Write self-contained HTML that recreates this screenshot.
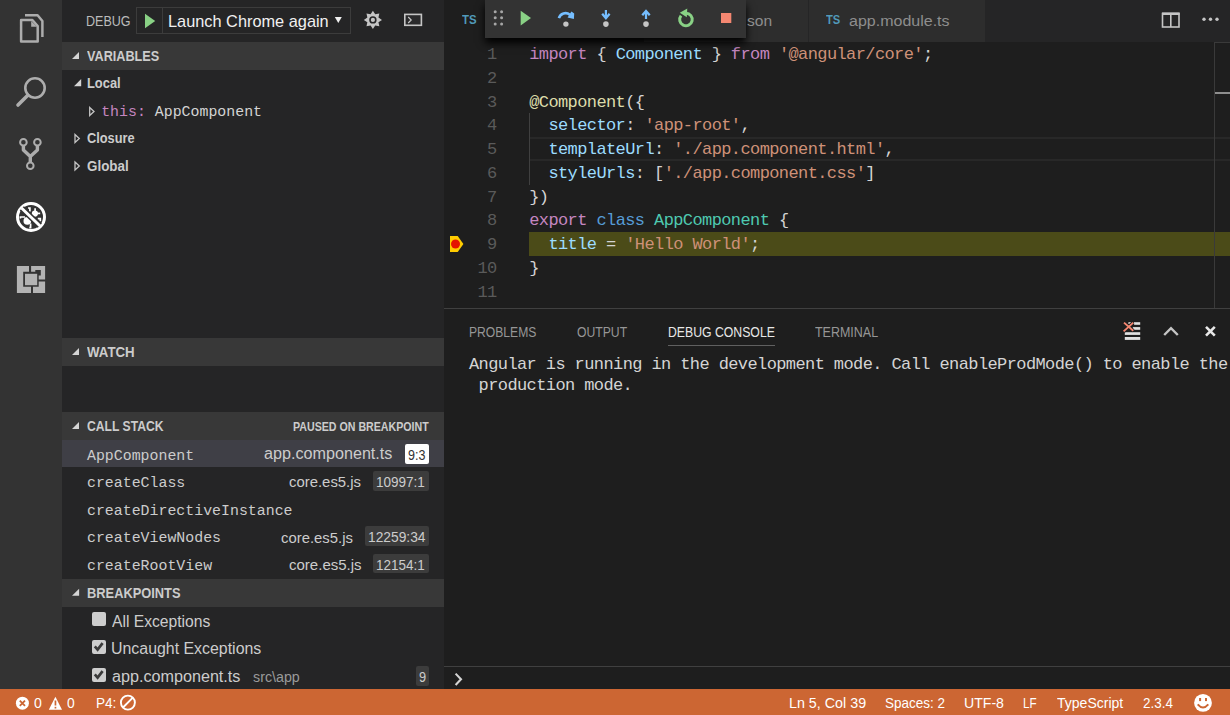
<!DOCTYPE html>
<html><head><meta charset="utf-8">
<style>
*{margin:0;padding:0;box-sizing:border-box}
html,body{width:1230px;height:715px;overflow:hidden;background:#1e1e1e}
body{position:relative;font-family:"Liberation Sans",sans-serif;color:#cccccc}
.a{position:absolute}
.t{position:absolute;white-space:pre;line-height:1;transform-origin:0 0}
.m{font-family:"Liberation Mono",monospace}
.b{font-weight:bold}
svg{position:absolute;overflow:visible}
.ln{position:absolute;left:444px;width:52.6px;text-align:right;font-family:"Liberation Mono",monospace;font-size:17px;letter-spacing:-0.6px;line-height:25.5px;color:#5a5a5a;white-space:pre}
.cl{position:absolute;left:529.2px;font-family:"Liberation Mono",monospace;font-size:17px;letter-spacing:-0.6px;line-height:25.5px;color:#d4d4d4;white-space:pre}
.k{color:#c586c0}.v{color:#9cdcfe}.s{color:#ce9178}.f{color:#dcdcaa}.c{color:#569cd6}.ty{color:#4ec9b0}

</style></head><body>

<!-- activity bar -->
<div class="a" style="left:0;top:0;width:62px;height:689px;background:#333333"></div>


<svg style="left:0;top:0" width="62" height="300">
 <g fill="none" stroke="#adadad" stroke-width="2.5" stroke-linejoin="round">
  <path d="M21.1 20 H32.4 L37.7 26 V41.4 H21.1 Z"/>
  <path d="M25 15.3 H37.6 L42.4 21 V37"/>
 </g>
 <path d="M31.2 21 V26.8 H37 Z" fill="#adadad"/>
 <g fill="none" stroke="#adadad">
  <circle cx="35" cy="88" r="9.7" stroke-width="2.6"/>
  <path d="M27.8 95.2 L18 105" stroke-width="3.6" stroke-linecap="round"/>
 </g>
 <g fill="none" stroke="#adadad" stroke-width="2">
  <circle cx="23.4" cy="142.2" r="3.3"/>
  <circle cx="37.4" cy="142.2" r="3.3"/>
  <circle cx="30.3" cy="165.7" r="3.3"/>
 </g>
 <path d="M23.4 145.5 V150 L30.3 156.5 L37.4 150 V145.5 M30.3 156 V162.4" fill="none" stroke="#adadad" stroke-width="3.4" stroke-linejoin="round"/>
 <circle cx="31" cy="217" r="13.5" fill="none" stroke="#ffffff" stroke-width="3"/>
 <g fill="#ffffff">
  <circle cx="34.9" cy="213.6" r="3.1"/>
  <circle cx="27.3" cy="220.9" r="3.8"/>
 </g>
 <g fill="none" stroke="#ffffff" stroke-width="1.7">
  <path d="M28 208 H29.9 V211.5"/>
  <path d="M35.1 208.2 V211.5"/>
  <path d="M36.5 213.4 H40.2"/>
  <path d="M37.8 218.6 H40.3 V221.2"/>
  <path d="M25 217 H20.4 V218.6"/>
  <path d="M30.6 223.5 V227.6 H29.3"/>
 </g>
 <path d="M21.8 208.3 L39.8 225.7" stroke="#333333" stroke-width="6"/>
 <path d="M21.5 208 L40.1 226" stroke="#ffffff" stroke-width="3"/>
 <g fill="#b3b3b3">
  <path d="M16.9 266 H29 V271.8 H23.2 V286.7 H31 V293 H16.9 Z"/>
  <path d="M31.1 266 H45.1 V279.6 H38.7 V275.6 H40.8 V270 H35.3 V271.8 H31.1 Z"/>
  <path d="M33 286.7 H38.7 V281.4 H45.1 V293 H33 Z"/>
  <rect x="25" y="273.8" width="12.2" height="11.4"/>
 </g>
</svg>

<!-- sidebar -->

<div class="a" style="left:62px;top:0;width:382px;height:689px;background:#252526"></div>
<!-- title -->
<div class="a" style="left:136px;top:7px;width:215px;height:27px;border:1px solid #3c3c3c"></div>
<div class="a" style="left:162px;top:8px;width:1px;height:25px;background:#3c3c3c"></div>
<svg style="left:0;top:0" width="1" height="1"><path d="M145 13.7 L155.2 21 L145 28.3 Z" fill="#89d185"/></svg>
<svg style="left:0;top:0" width="1" height="1"><path d="M334.8 17 H341.8 L338.3 23 Z" fill="#f0f0f0"/></svg>
<!-- gear -->
<svg style="left:0;top:0" width="1" height="1">
 <polygon points="372.90,10.80 375.20,14.36 379.33,13.47 378.44,17.60 382.00,19.90 378.44,22.20 379.33,26.33 375.20,25.44 372.90,29.00 370.60,25.44 366.47,26.33 367.36,22.20 363.80,19.90 367.36,17.60 366.47,13.47 370.60,14.36" fill="#c5c5c5"/>
 <circle cx="372.9" cy="19.9" r="3.7" fill="#252526"/>
 <circle cx="372.9" cy="19.9" r="2.1" fill="#c5c5c5"/>
</svg>
<!-- terminal icon -->
<svg style="left:0;top:0" width="1" height="1">
 <rect x="404.8" y="14.4" width="16.6" height="10.9" fill="#2a2a2b" stroke="#c5c5c5" stroke-width="1.6"/>
 <path d="M408.2 17 L411.2 20 L408.2 23" fill="none" stroke="#c5c5c5" stroke-width="1.2"/>
</svg>

<!-- VARIABLES -->
<div class="a" style="left:62px;top:42px;width:382px;height:27.5px;background:#383838"></div>
<svg style="left:0;top:0" width="1" height="1"><path d="M79 52 V59 H72 Z" fill="#d4d4d4"/></svg>

<svg style="left:0;top:0" width="1" height="1"><path d="M81.2 79 V86.2 H74 Z" fill="#d4d4d4"/></svg>
<svg style="left:0;top:0" width="1" height="1"><path d="M89.7 107.5 L94 111.5 L89.7 115.5 Z" fill="none" stroke="#c5c5c5" stroke-width="1.3"/></svg>
<div class="t m" style="left:101.2px;top:104.8px;font-size:14.9px;color:#c586c0">this:<span style="color:#d4d4d4"> AppComponent</span></div>
<svg style="left:0;top:0" width="1" height="1"><path d="M75 134.5 L79.3 138.5 L75 142.5 Z" fill="none" stroke="#c5c5c5" stroke-width="1.3"/></svg>
<svg style="left:0;top:0" width="1" height="1"><path d="M75 162 L79.3 166 L75 170 Z" fill="none" stroke="#c5c5c5" stroke-width="1.3"/></svg>

<!-- WATCH -->
<div class="a" style="left:62px;top:338px;width:382px;height:27.5px;background:#383838"></div>
<svg style="left:0;top:0" width="1" height="1"><path d="M79 348 V355 H72 Z" fill="#d4d4d4"/></svg>

<!-- CALL STACK -->
<div class="a" style="left:62px;top:412px;width:382px;height:28px;background:#383838"></div>
<svg style="left:0;top:0" width="1" height="1"><path d="M79 422 V429 H72 Z" fill="#d4d4d4"/></svg>

<div class="a" style="left:62px;top:440px;width:382px;height:27px;background:#3f3f46"></div>
<div class="t m" style="left:87px;top:448.8px;font-size:14.9px;color:#cccccc">AppComponent</div>
<div class="a" style="left:405px;top:444px;width:24px;height:19.5px;background:#ffffff;border-radius:2px"></div>

<div class="t m" style="left:87px;top:476.3px;font-size:14.9px;color:#cccccc">createClass</div>
<div class="a" style="left:373px;top:471.4px;width:56px;height:19.5px;background:#3c3c3c;border-radius:2px"></div>

<div class="t m" style="left:87px;top:503.8px;font-size:14.9px;color:#cccccc">createDirectiveInstance</div>

<div class="t m" style="left:87px;top:531.3px;font-size:14.9px;color:#cccccc">createViewNodes</div>
<div class="a" style="left:365px;top:526.4px;width:64px;height:19.5px;background:#3c3c3c;border-radius:2px"></div>

<div class="t m" style="left:87px;top:558.8px;font-size:14.9px;color:#cccccc">createRootView</div>
<div class="a" style="left:373px;top:553.9px;width:56px;height:19.5px;background:#3c3c3c;border-radius:2px"></div>

<!-- BREAKPOINTS -->
<div class="a" style="left:62px;top:578.8px;width:382px;height:28px;background:#383838"></div>
<svg style="left:0;top:0" width="1" height="1"><path d="M79.1 588.8 V595.8 H72 Z" fill="#d4d4d4"/></svg>

<div class="a" style="left:92px;top:612px;width:14px;height:14px;background:#cdcdcd;border-radius:2px"></div>
<div class="a" style="left:92px;top:640px;width:14px;height:14px;background:#cdcdcd;border-radius:2px"></div>
<svg style="left:0;top:0" width="1" height="1"><path d="M94.8 646.4 L97.6 649.6 L102.6 643.2" fill="none" stroke="#3a3a3a" stroke-width="2.7"/></svg>
<div class="a" style="left:92px;top:668px;width:14px;height:14px;background:#cdcdcd;border-radius:2px"></div>
<svg style="left:0;top:0" width="1" height="1"><path d="M94.8 674.4 L97.6 677.6 L102.6 671.2" fill="none" stroke="#3a3a3a" stroke-width="2.7"/></svg>
<div class="a" style="left:416px;top:666.2px;width:13px;height:20.3px;background:#3c3c3c;border-radius:2px"></div>



<!-- editor -->
<div class="a" style="left:444px;top:0;width:786px;height:42px;background:#252526"></div>
<div class="a" style="left:444px;top:0;width:200px;height:42px;background:#1e1e1e"></div>
<div class="a" style="left:644px;top:0;width:163.5px;height:42px;background:#2d2d2d"></div>
<div class="a" style="left:808.5px;top:0;width:176.5px;height:42px;background:#2d2d2d"></div>
<!-- split / more -->
<svg style="left:0;top:0" width="1" height="1">
 <rect x="1162.5" y="13.5" width="16.5" height="13.5" fill="none" stroke="#c5c5c5" stroke-width="1.6"/>
 <rect x="1162" y="12.5" width="17.5" height="2.5" fill="#c5c5c5"/>
 <rect x="1170" y="13.5" width="1.6" height="13.5" fill="#c5c5c5"/>
 <circle cx="1204" cy="19.3" r="1.7" fill="#c5c5c5"/>
 <circle cx="1210.5" cy="19.3" r="1.7" fill="#c5c5c5"/>
 <circle cx="1217" cy="19.3" r="1.7" fill="#c5c5c5"/>
</svg>


<!-- current line box -->
<div class="a" style="left:530px;top:137px;width:700px;height:24px;border-top:2px solid #282828;border-bottom:2px solid #282828"></div>
<!-- stack frame highlight -->
<div class="a" style="left:529px;top:232px;width:701px;height:23.75px;background:#4b4b18"></div>
<!-- indent guide -->
<div class="a" style="left:529px;top:113.25px;width:1px;height:71.25px;background:#404040"></div>
<!-- overview ruler -->
<div class="a" style="left:1214px;top:42px;width:1px;height:266px;background:#3a3a3a"></div>
<div class="a" style="left:1215px;top:92px;width:15px;height:1.5px;background:#8e8e8e"></div>
<div class="a" style="left:1214px;top:42px;width:16px;height:1px;background:#3a3a3a"></div>
<!-- breakpoint marker -->
<svg style="left:0;top:0" width="1" height="1">
 <path d="M450 236 H457.7 L463.4 244 L457.7 251.9 H450 Z" fill="#ffcc00"/>
 <circle cx="455.5" cy="244" r="4.5" fill="#e51400"/>
</svg>
<div class="ln" style="top:42.00px">1</div>
<div class="cl" style="top:42.00px"><span class="k">import</span> { <span class="v">Component</span> } <span class="k">from</span> <span class="s">'@angular/core'</span>;</div>
<div class="ln" style="top:65.75px">2</div>
<div class="ln" style="top:89.50px">3</div>
<div class="cl" style="top:89.50px"><span class="f">@Component</span>({</div>
<div class="ln" style="top:113.25px">4</div>
<div class="cl" style="top:113.25px">  <span class="v">selector</span>: <span class="s">'app-root'</span>,</div>
<div class="ln" style="top:137.00px">5</div>
<div class="cl" style="top:137.00px">  <span class="v">templateUrl</span>: <span class="s">'./app.component.html'</span>,</div>
<div class="ln" style="top:160.75px">6</div>
<div class="cl" style="top:160.75px">  <span class="v">styleUrls</span>: [<span class="s">'./app.component.css'</span>]</div>
<div class="ln" style="top:184.50px">7</div>
<div class="cl" style="top:184.50px">})</div>
<div class="ln" style="top:208.25px">8</div>
<div class="cl" style="top:208.25px"><span class="k">export</span> <span class="c">class</span> <span class="ty">AppComponent</span> {</div>
<div class="ln" style="top:232.00px">9</div>
<div class="cl" style="top:232.00px">  <span class="v">title</span> = <span class="s">'Hello World'</span>;</div>
<div class="ln" style="top:255.75px">10</div>
<div class="cl" style="top:255.75px">}</div>
<div class="ln" style="top:279.50px">11</div>


<!-- debug toolbar -->
<div class="a" style="left:485px;top:0;width:261px;height:38px;background:#333333;box-shadow:0 5px 8px #000"></div>
<svg style="left:0;top:0" width="1" height="1">
 <g fill="#a6a6a6">
  <circle cx="495.2" cy="11.7" r="1.5"/><circle cx="501.6" cy="11.7" r="1.5"/>
  <circle cx="495.2" cy="17.8" r="1.5"/><circle cx="501.6" cy="17.8" r="1.5"/>
  <circle cx="495.2" cy="24" r="1.5"/><circle cx="501.6" cy="24" r="1.5"/>
 </g>
 <path d="M520.7 10.7 L531 18 L520.7 25.4 Z" fill="#89d185"/>
 <!-- step over -->
 <path d="M558.9 18.2 A6.8 6.8 0 0 1 569.9 14.8" fill="none" stroke="#75beff" stroke-width="2.6"/>
 <path d="M571.4 11.6 L574.2 13.4 L573.9 18.9 L567.6 17.5 Z" fill="#75beff"/>
 <circle cx="565.9" cy="24.1" r="2.7" fill="#c5c5c5"/>
 <!-- step into -->
 <path d="M605.9 10 V17.5" stroke="#75beff" stroke-width="2.2"/>
 <path d="M602.2 13.8 L605.9 18.2 L609.6 13.8" fill="none" stroke="#75beff" stroke-width="2.3"/>
 <circle cx="605.9" cy="24.1" r="2.8" fill="#c5c5c5"/>
 <!-- step out -->
 <path d="M646 11.5 V19" stroke="#75beff" stroke-width="2.2"/>
 <path d="M642.3 15.3 L646 11 L649.7 15.3" fill="none" stroke="#75beff" stroke-width="2.3"/>
 <circle cx="646" cy="24.1" r="2.8" fill="#c5c5c5"/>
 <!-- restart -->
 <path d="M686 13.2 A6.3 6.3 0 1 1 681 15.6" fill="none" stroke="#89d185" stroke-width="3"/>
 <path d="M679.8 12.8 L687.3 8.6 L686.8 17.2 Z" fill="#89d185"/>
 <!-- stop -->
 <rect x="721" y="13" width="10.3" height="10" fill="#f48771"/>
</svg>

<!-- status bar -->

<!-- panel -->
<div class="a" style="left:444px;top:308px;width:786px;height:381px;background:#1e1e1e;border-top:1px solid #404040"></div>
<div class="a" style="left:668px;top:345px;width:107px;height:1px;background:#606060"></div>
<svg style="left:0;top:0" width="1" height="1">
 <g fill="#e0e0e0">
  <rect x="1134" y="322.2" width="6.2" height="2.6"/>
  <rect x="1132.8" y="327.1" width="7.4" height="2.7"/>
  <rect x="1124.8" y="332.2" width="15.4" height="2.7"/>
  <rect x="1124.8" y="337" width="15.4" height="2.9"/>
  <rect x="1128.4" y="322.2" width="3.2" height="1.8"/>
 </g>
 <path d="M1124 322.6 L1133.3 330.8 M1133.3 322.6 L1123.6 331.4" stroke="#1e1e1e" stroke-width="3.6" fill="none"/>
 <path d="M1124 322.6 L1133.3 330.8 M1133.3 322.6 L1123.6 331.4" stroke="#f48771" stroke-width="1.9" fill="none"/>
 <path d="M1164.2 335 L1171 328.2 L1177.8 335" stroke="#c5c5c5" stroke-width="2.4" fill="none"/>
 <path d="M1206 326.8 L1214.8 335.6 M1214.8 326.8 L1206 335.6" stroke="#e8e8e8" stroke-width="2.6" fill="none"/>
</svg>
<div class="t m" style="left:469px;top:355.5px;font-size:17px;letter-spacing:-0.6px;color:#d4d4d4">Angular is running in the development mode. Call enableProdMode() to enable the</div>
<div class="t m" style="left:478.6px;top:377.3px;font-size:17px;letter-spacing:-0.6px;color:#d4d4d4">production mode.</div>
<div class="a" style="left:444px;top:666px;width:786px;height:1px;background:#404040"></div>
<svg style="left:0;top:0" width="1" height="1"><path d="M455.6 673.6 L461 679.3 L455.6 685" fill="none" stroke="#d4d4d4" stroke-width="2.1"/></svg>

<div class="a" style="left:0;top:689px;width:1230px;height:26px;background:#cc6633"></div>
<svg style="left:0;top:0" width="1" height="1">
 <circle cx="22.4" cy="703.2" r="6.5" fill="#ffffff"/>
 <path d="M19.8 700.6 L25 705.8 M25 700.6 L19.8 705.8" stroke="#cc6633" stroke-width="1.8"/>
 <path d="M55.4 696.7 L62 709.7 H48.8 Z" fill="#ffffff"/>
 <rect x="54.6" y="700.5" width="1.7" height="5" fill="#cc6633"/>
 <rect x="54.6" y="706.8" width="1.7" height="1.7" fill="#cc6633"/>
 <circle cx="127.9" cy="702.6" r="7" fill="none" stroke="#ffffff" stroke-width="1.9"/>
 <path d="M123 707.5 L132.8 697.7" stroke="#ffffff" stroke-width="1.9"/>
 <circle cx="1203" cy="702.9" r="8.9" fill="#ffffff"/>
 <rect x="1199.1" y="698" width="2" height="3.1" fill="#cc6633"/>
 <rect x="1205" y="698" width="2" height="3.1" fill="#cc6633"/>
 <path d="M1197.7 704.4 Q1203 710.6 1208.3 704.4" fill="none" stroke="#cc6633" stroke-width="2"/>
</svg>


<!-- texts -->
<div class="t" style="left:86.00px;top:14.15px;font-size:14px;color:#bbbbbb;transform:scaleX(0.8957)">DEBUG</div>
<div class="t" style="left:168.04px;top:13.01px;font-size:17px;color:#f0f0f0;transform:scaleX(0.9607)">Launch Chrome again</div>
<div class="t b" style="left:86.90px;top:49.05px;font-size:14px;color:#cccccc;transform:scaleX(0.9042)">VARIABLES</div>
<div class="t b" style="left:87.00px;top:76.05px;font-size:14px;color:#cccccc;transform:scaleX(0.9194)">Local</div>
<div class="t b" style="left:87.00px;top:131.15px;font-size:14px;color:#cccccc;transform:scaleX(0.9133)">Closure</div>
<div class="t b" style="left:87.00px;top:159.15px;font-size:14px;color:#cccccc;transform:scaleX(0.9562)">Global</div>
<div class="t b" style="left:87.10px;top:345.45px;font-size:14px;color:#cccccc;transform:scaleX(0.9487)">WATCH</div>
<div class="t b" style="left:87.10px;top:419.15px;font-size:14px;color:#cccccc;transform:scaleX(0.8676)">CALL STACK</div>
<div class="t b" style="left:293.00px;top:421.24px;font-size:12px;color:#cccccc;transform:scaleX(0.8863)">PAUSED ON BREAKPOINT</div>
<div class="t" style="left:264.00px;top:446.26px;font-size:16px;color:#cccccc;transform:scaleX(1.0095)">app.component.ts</div>
<div class="t" style="left:408.20px;top:447.95px;font-size:14px;color:#333333;transform:scaleX(0.8945)">9:3</div>
<div class="t" style="left:289.00px;top:474.30px;font-size:15px;color:#cccccc;transform:scaleX(0.9926)">core.es5.js</div>
<div class="t" style="left:376.23px;top:475.15px;font-size:14px;color:#cccccc;transform:scaleX(0.9655)">10997:1</div>
<div class="t" style="left:281.10px;top:529.60px;font-size:15px;color:#cccccc;transform:scaleX(0.9912)">core.es5.js</div>
<div class="t" style="left:368.12px;top:530.45px;font-size:14px;color:#cccccc;transform:scaleX(0.9843)">12259:34</div>
<div class="t" style="left:289.00px;top:557.10px;font-size:15px;color:#cccccc;transform:scaleX(1.0009)">core.es5.js</div>
<div class="t" style="left:376.44px;top:557.95px;font-size:14px;color:#cccccc;transform:scaleX(0.9615)">12154:1</div>
<div class="t b" style="left:87.00px;top:585.85px;font-size:14px;color:#cccccc;transform:scaleX(0.9177)">BREAKPOINTS</div>
<div class="t" style="left:111.70px;top:613.96px;font-size:16px;color:#cccccc;transform:scaleX(0.9782)">All Exceptions</div>
<div class="t" style="left:110.71px;top:640.86px;font-size:16px;color:#cccccc;transform:scaleX(0.9940)">Uncaught Exceptions</div>
<div class="t" style="left:111.70px;top:668.66px;font-size:16px;color:#cccccc;transform:scaleX(1.0095)">app.component.ts</div>
<div class="t" style="left:252.50px;top:670.15px;font-size:14px;color:#9a9a9a;transform:scaleX(1.0190)">src\app</div>
<div class="t" style="left:418.90px;top:669.55px;font-size:14px;color:#cccccc;transform:scaleX(0.9125)">9</div>
<div class="t b" style="left:462.20px;top:12.57px;font-size:13.5px;color:#519aba;transform:scaleX(0.8466)">TS</div>
<div class="t" style="left:746.50px;top:12.88px;font-size:15.5px;color:#8e8e8e;transform:scaleX(1.0053)">son</div>
<div class="t b" style="left:826.20px;top:12.57px;font-size:13.5px;color:#519aba;transform:scaleX(0.8292)">TS</div>
<div class="t" style="left:849.00px;top:12.88px;font-size:15.5px;color:#8e8e8e;transform:scaleX(1.0326)">app.module.ts</div>
<div class="t" style="left:468.73px;top:325.15px;font-size:14px;color:#969696;transform:scaleX(0.8658)">PROBLEMS</div>
<div class="t" style="left:576.80px;top:325.15px;font-size:14px;color:#969696;transform:scaleX(0.8707)">OUTPUT</div>
<div class="t" style="left:667.62px;top:324.95px;font-size:14px;color:#e7e7e7;transform:scaleX(0.8750)">DEBUG CONSOLE</div>
<div class="t" style="left:815.20px;top:325.15px;font-size:14px;color:#969696;transform:scaleX(0.8915)">TERMINAL</div>
<div class="t" style="left:34.20px;top:695.30px;font-size:15px;color:#ffffff;transform:scaleX(0.9375)">0</div>
<div class="t" style="left:67.20px;top:695.30px;font-size:15px;color:#ffffff;transform:scaleX(0.9250)">0</div>
<div class="t" style="left:96.20px;top:695.30px;font-size:15px;color:#ffffff;transform:scaleX(0.9043)">P4:</div>
<div class="t" style="left:788.55px;top:695.30px;font-size:15px;color:#ffffff;transform:scaleX(0.9529)">Ln 5, Col 39</div>
<div class="t" style="left:885.20px;top:695.30px;font-size:15px;color:#ffffff;transform:scaleX(0.8980)">Spaces: 2</div>
<div class="t" style="left:964.06px;top:695.30px;font-size:15px;color:#ffffff;transform:scaleX(0.9404)">UTF-8</div>
<div class="t" style="left:1023.12px;top:695.30px;font-size:15px;color:#ffffff;transform:scaleX(0.7771)">LF</div>
<div class="t" style="left:1056.80px;top:695.30px;font-size:15px;color:#ffffff;transform:scaleX(0.9345)">TypeScript</div>
<div class="t" style="left:1143.20px;top:695.30px;font-size:15px;color:#ffffff;transform:scaleX(0.8964)">2.3.4</div>
</body></html>
